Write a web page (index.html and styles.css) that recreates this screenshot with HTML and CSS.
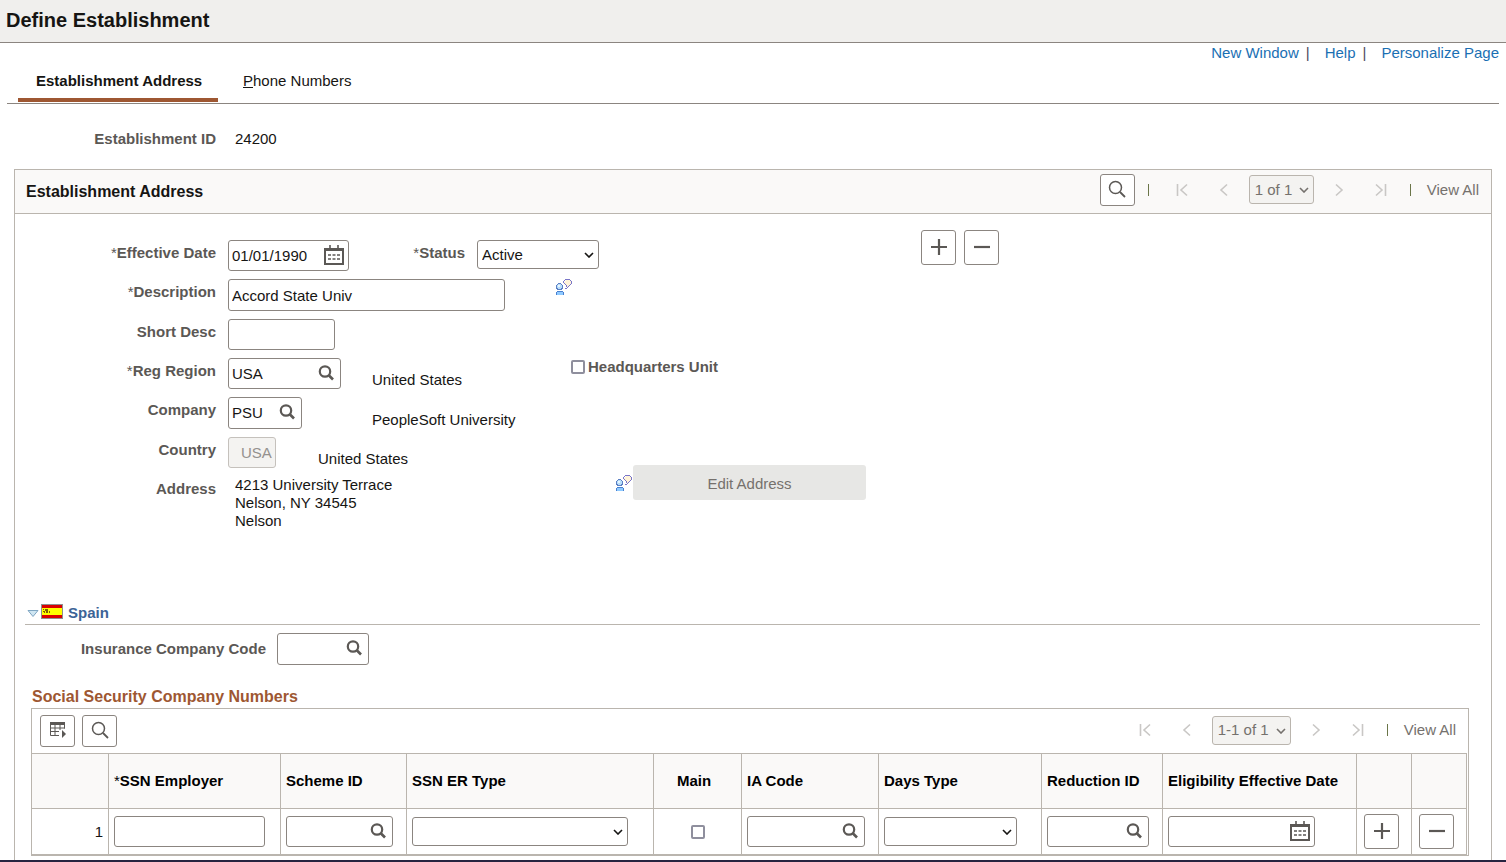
FILE: index.html
```
<!DOCTYPE html>
<html lang="en">
<head>
    <meta charset="UTF-8">
    <meta name="viewport" content="width=device-width, initial-scale=1.0">
    <title>Define Establishment</title>
    <link rel="stylesheet" href="styles.css">
</head>
<body>
    <!-- Shared icons -->
    <svg class="sprite" aria-hidden="true">
        <symbol id="icon-search" viewBox="0 0 16 16"><circle cx="7" cy="6.500" r="5.200" fill="none" stroke="currentColor" stroke-width="2.200"/><path d="M10.500 10L15 14.500" stroke="currentColor" stroke-width="2.600"/></symbol>
        <symbol id="icon-find" viewBox="0 0 18 18"><circle cx="7.500" cy="7.500" r="6" fill="none" stroke="currentColor" stroke-width="1.500"/><path d="M12 12L17 17" stroke="currentColor" stroke-width="1.800"/></symbol>
        <symbol id="icon-calendar" viewBox="0 0 20 20"><path d="M1 4H19V19H1Z" fill="none" stroke="currentColor" stroke-width="2"/><path d="M1 5.500H19" stroke="currentColor" stroke-width="1"/><path d="M6 0V6M14 0V6" stroke="currentColor" stroke-width="1.600"/><path d="M4 10H16M4 14H16" stroke="currentColor" stroke-width="1.600" stroke-dasharray="3 1.500"/></symbol>
        <symbol id="icon-down" viewBox="0 0 10 6"><path d="M1 1L5 5L9 1" fill="none" stroke="currentColor" stroke-width="1.600"/></symbol>
        <symbol id="icon-first" viewBox="0 0 12 14"><path d="M1.500 1V13M11 1.500L5 7L11 12.500" fill="none" stroke="currentColor" stroke-width="1.600"/></symbol>
        <symbol id="icon-prev" viewBox="0 0 12 14"><path d="M9 1.500L3 7L9 12.500" fill="none" stroke="currentColor" stroke-width="1.600"/></symbol>
        <symbol id="icon-next" viewBox="0 0 12 14"><path d="M3 1.500L9 7L3 12.500" fill="none" stroke="currentColor" stroke-width="1.600"/></symbol>
        <symbol id="icon-last" viewBox="0 0 12 14"><path d="M10.500 1V13M1 1.500L7 7L1 12.500" fill="none" stroke="currentColor" stroke-width="1.600"/></symbol>
        <symbol id="icon-plus" viewBox="0 0 16 16"><path d="M0 8H16M8 0V16" stroke="currentColor" stroke-width="2.200"/></symbol>
        <symbol id="icon-minus" viewBox="0 0 16 16"><path d="M0 8H16" stroke="currentColor" stroke-width="2.200"/></symbol>
        <symbol id="icon-grid" viewBox="0 0 16 16"><path d="M0 0H15V3H0Z" fill="currentColor"/><path d="M.500 2V13.500H9M5 2V13.500M10 2V8M14.500 2V6.500M0 6H15M0 9.500H9" fill="none" stroke="currentColor"/><path d="M12 8L16 12L12 16Z" fill="currentColor"/></symbol>
        <symbol id="icon-comment" viewBox="0 0 17 16">
            <path d="M7 4L10 1H14L16 3V4L12 9H11V7L8 5Z" fill="#fff3d8"/>
            <path d="M9 0H14V1H9ZM8 1H9V2H8ZM14 1H15V2H14ZM7 2H8V4H7ZM15 2H16V5H15ZM14 5H15V6H14ZM13 6H14V7H13ZM12 7H13V8H12ZM11 8H12V9H11ZM9 9H11V10H9ZM8 4H9V5H8ZM9 5H10V6H9ZM10 6H11V8H10Z" fill="#7a76c8"/>
            <circle cx="3.500" cy="7.500" r="3" fill="#b9defa" stroke="#5b7fc4"/>
            <path d="M1 13H7V16H1Z" fill="#8fcaff"/>
            <path d="M1 12H7V13H1ZM0 13H1V16H0ZM7 13H8V16H7Z" fill="#4a80d0"/>
            <path d="M2 6H4V8H2Z" fill="#e8f6ff"/>
        </symbol>
    </svg>

    <header class="page-header">
        <h1>Define Establishment</h1>
    </header>

    <main class="page">
        <nav class="page-links">
            <a href="#">New Window</a><span>|</span>
            <a href="#">Help</a><span>|</span>
            <a href="#">Personalize Page</a>
        </nav>

        <nav class="tabs">
            <a class="tab active" href="#">Establishment Address</a>
            <a class="tab" href="#"><u>P</u>hone Numbers</a>
        </nav>

        <div class="establishment-id">
            <span class="label">Establishment ID</span>
            <span class="value">24200</span>
        </div>

        <section class="panel">
            <div class="panel-header">
                <h2>Establishment Address</h2>
                <div class="pager">
                    <button class="icon-button" aria-label="Find"><svg width="18" height="18"><use href="#icon-find"/></svg></button>
                    <span class="separator"></span>
                    <button class="step" disabled aria-label="First"><svg width="12" height="14"><use href="#icon-first"/></svg></button>
                    <button class="step" disabled aria-label="Previous"><svg width="12" height="14"><use href="#icon-prev"/></svg></button>
                    <span class="select-box pager-select">
                        <select disabled aria-label="Row"><option>1 of 1</option></select>
                        <svg width="10" height="6"><use href="#icon-down"/></svg>
                    </span>
                    <button class="step" disabled aria-label="Next"><svg width="12" height="14"><use href="#icon-next"/></svg></button>
                    <button class="step" disabled aria-label="Last"><svg width="12" height="14"><use href="#icon-last"/></svg></button>
                    <span class="separator"></span>
                    <span class="view-all">View All</span>
                </div>
            </div>

            <div class="form">
                <div class="fields">
                    <div class="row">
                        <label class="label" for="effdt"><span class="required">*</span>Effective Date</label>
                        <span class="lookup date">
                            <input type="text" id="effdt" value="01/01/1990">
                            <button aria-label="Choose a date"><svg width="20" height="20"><use href="#icon-calendar"/></svg></button>
                        </span>
                        <label class="label status-label" for="status"><span class="required">*</span>Status</label>
                        <span class="select-box status">
                            <select id="status"><option>Active</option><option>Inactive</option></select>
                            <svg width="10" height="6"><use href="#icon-down"/></svg>
                        </span>
                    </div>
                    <div class="row">
                        <label class="label" for="descr"><span class="required">*</span>Description</label>
                        <input class="text description tall" type="text" id="descr" value="Accord State Univ">
                        <svg class="comment" width="17" height="16" shape-rendering="crispEdges"><use href="#icon-comment"/></svg>
                    </div>
                    <div class="row">
                        <label class="label" for="short-descr">Short Desc</label>
                        <input class="text short" type="text" id="short-descr">
                    </div>
                    <div class="row">
                        <label class="label" for="region"><span class="required">*</span>Reg Region</label>
                        <span class="field-cell">
                            <span class="lookup region">
                                <input type="text" id="region" value="USA">
                                <button aria-label="Look up Reg Region"><svg width="16" height="16"><use href="#icon-search"/></svg></button>
                            </span>
                        </span>
                        <span class="field-text">United States</span>
                        <span class="check">
                            <input type="checkbox" id="headquarters">
                            <label for="headquarters">Headquarters Unit</label>
                        </span>
                    </div>
                    <div class="row">
                        <label class="label" for="company">Company</label>
                        <span class="field-cell">
                            <span class="lookup company tall">
                                <input type="text" id="company" value="PSU">
                                <button aria-label="Look up Company"><svg width="16" height="16"><use href="#icon-search"/></svg></button>
                            </span>
                        </span>
                        <span class="field-text">PeopleSoft University</span>
                    </div>
                    <div class="split">
                        <div class="split-left">
                            <div class="row">
                                <label class="label" for="country">Country</label>
                                <span class="field-cell narrow">
                                    <input class="text country" type="text" id="country" value="USA" disabled>
                                </span>
                                <span class="field-text">United States</span>
                            </div>
                            <div class="row">
                                <span class="label">Address</span>
                                <address>4213 University Terrace<br>Nelson, NY 34545<br>Nelson</address>
                            </div>
                        </div>
                        <div class="edit-address">
                            <svg width="17" height="16" shape-rendering="crispEdges"><use href="#icon-comment"/></svg>
                            <button disabled>Edit Address</button>
                        </div>
                    </div>
                </div>
                <div class="row-actions">
                    <button class="icon-button square" aria-label="Add a new row"><svg width="16" height="16"><use href="#icon-plus"/></svg></button>
                    <button class="icon-button square" aria-label="Delete row"><svg width="16" height="16"><use href="#icon-minus"/></svg></button>
                </div>
            </div>

            <!-- Spain -->
            <div class="country-header">
                <svg class="arrow" width="12" height="8"><path d="M1 .500H11L6 6.500Z" fill="#cfe6f2" stroke="#7fa6c2"/></svg>
                <svg width="22" height="15" shape-rendering="crispEdges">
                    <rect width="22" height="15" fill="#8f8f8f"/>
                    <rect x="1" y="1" width="20" height="13" fill="#d90000"/>
                    <rect x="1" y="4" width="20" height="7" fill="#ffff00"/>
                    <path d="M2 5H3V6H2ZM4 5H7V7H4ZM2 7H4V8H2ZM5 7H7V9H5ZM8 7H9V9H8ZM3 8H4V9H3Z" fill="#806000"/>
                </svg>
                <a href="#">Spain</a>
            </div>

            <div class="insurance">
                <label for="insurance-code">Insurance Company Code</label>
                <span class="lookup tall insurance-code">
                    <input type="text" id="insurance-code">
                    <button aria-label="Look up Insurance Company Code"><svg width="16" height="16"><use href="#icon-search"/></svg></button>
                </span>
            </div>

            <div class="grid">
                <h3>Social Security Company Numbers</h3>
                <div class="grid-box">
                    <div class="grid-toolbar">
                        <button class="icon-button" aria-label="Grid actions"><svg width="16" height="16"><use href="#icon-grid"/></svg></button>
                        <button class="icon-button" aria-label="Find in grid"><svg width="18" height="18"><use href="#icon-find"/></svg></button>
                        <div class="pager">
                            <button class="step" disabled aria-label="First"><svg width="12" height="14"><use href="#icon-first"/></svg></button>
                            <button class="step" disabled aria-label="Previous"><svg width="12" height="14"><use href="#icon-prev"/></svg></button>
                            <span class="select-box pager-select wide">
                                <select disabled aria-label="Rows"><option>1-1 of 1</option></select>
                                <svg width="10" height="6"><use href="#icon-down"/></svg>
                            </span>
                            <button class="step" disabled aria-label="Next"><svg width="12" height="14"><use href="#icon-next"/></svg></button>
                            <button class="step" disabled aria-label="Last"><svg width="12" height="14"><use href="#icon-last"/></svg></button>
                            <span class="separator"></span>
                            <span class="view-all">View All</span>
                        </div>
                    </div>
                    <table>
                        <colgroup>
                            <col class="col-number"><col class="col-employer"><col class="col-scheme"><col class="col-type">
                            <col class="col-main"><col class="col-ia"><col class="col-days"><col class="col-reduction">
                            <col class="col-date"><col class="col-action"><col class="col-action">
                        </colgroup>
                        <thead>
                            <tr>
                                <th></th>
                                <th><span class="required">*</span>SSN Employer</th>
                                <th>Scheme ID</th>
                                <th>SSN ER Type</th>
                                <th class="center">Main</th>
                                <th>IA Code</th>
                                <th>Days Type</th>
                                <th>Reduction ID</th>
                                <th>Eligibility Effective Date</th>
                                <th></th>
                                <th></th>
                            </tr>
                        </thead>
                        <tbody>
                            <tr>
                                <td class="number">1</td>
                                <td><input class="text employer" type="text" aria-label="SSN Employer"></td>
                                <td>
                                    <span class="lookup scheme">
                                        <input type="text" aria-label="Scheme ID">
                                        <button aria-label="Look up Scheme ID"><svg width="16" height="16"><use href="#icon-search"/></svg></button>
                                    </span>
                                </td>
                                <td>
                                    <span class="select-box er-type">
                                        <select aria-label="SSN ER Type"><option></option></select>
                                        <svg width="10" height="6"><use href="#icon-down"/></svg>
                                    </span>
                                </td>
                                <td class="center"><input type="checkbox" aria-label="Main"></td>
                                <td>
                                    <span class="lookup ia-code">
                                        <input type="text" aria-label="IA Code">
                                        <button aria-label="Look up IA Code"><svg width="16" height="16"><use href="#icon-search"/></svg></button>
                                    </span>
                                </td>
                                <td>
                                    <span class="select-box days-type">
                                        <select aria-label="Days Type"><option></option></select>
                                        <svg width="10" height="6"><use href="#icon-down"/></svg>
                                    </span>
                                </td>
                                <td>
                                    <span class="lookup reduction">
                                        <input type="text" aria-label="Reduction ID">
                                        <button aria-label="Look up Reduction ID"><svg width="16" height="16"><use href="#icon-search"/></svg></button>
                                    </span>
                                </td>
                                <td>
                                    <span class="lookup date eligibility">
                                        <input type="text" aria-label="Eligibility Effective Date">
                                        <button aria-label="Choose a date"><svg width="20" height="20"><use href="#icon-calendar"/></svg></button>
                                    </span>
                                </td>
                                <td class="action"><button class="icon-button square" aria-label="Add row"><svg width="16" height="16"><use href="#icon-plus"/></svg></button></td>
                                <td class="action"><button class="icon-button square" aria-label="Delete row 1"><svg width="16" height="16"><use href="#icon-minus"/></svg></button></td>
                            </tr>
                        </tbody>
                    </table>
                </div>
            </div>
        </section>
    </main>
</body>
</html>
```
FILE: styles.css
```
* {
    box-sizing: border-box;
}
body {
    margin: 0;
    min-height: 100vh;
    display: flex;
    flex-direction: column;
    border-bottom: 2px solid #262440;
    background-color: white;
    color: #161513;
    font-family: Arial, "Liberation Sans", sans-serif;
    font-size: 15px;
    line-height: 18px;
}
h1, h2, h3 {
    margin: 0;
}
input, select, button {
    font: inherit;
    color: inherit;
}
button {
    padding: 0;
    cursor: pointer;
}
button:disabled {
    cursor: default;
}
a {
    text-decoration: none;
}
svg {
    display: block;
    flex: none;
}
.sprite {
    position: absolute;
    width: 0;
    height: 0;
}

/* Header */
.page-header {
    height: 43px;
    padding: 8px 6px;
    background-color: #f0efed;
    border-bottom: 1px solid #8b8580;
}
.page-header h1 {
    font-size: 20px;
    line-height: 24px;
}
.page {
    flex: 1;
    display: flex;
    flex-direction: column;
}
.page-links {
    display: flex;
    justify-content: flex-end;
    padding: 1px 7px 0;
    color: #4a4a60;
}
.page-links a {
    color: #1a6fb3;
}
.page-links span {
    margin: 0 15px 0 7px;
}

/* Tabs */
.tabs {
    display: flex;
    margin: 0 7px;
    padding: 10px 11px 1px;
    border-bottom: 1px solid #8b8580;
}
.tab {
    height: 30px;
    padding: 0 18px;
    color: #161513;
    border-bottom: 4px solid transparent;
}
.tab.active {
    width: 200px;
    white-space: nowrap;
    font-weight: bold;
    border-bottom-color: #9e5732;
}
.tab + .tab {
    margin-left: 7px;
}
.label {
    flex: none;
    width: 201px;
    padding-top: 4px;
    text-align: right;
    font-weight: bold;
    color: #5b5855;
}
.required {
    font-weight: normal;
}
.establishment-id {
    display: flex;
    align-items: flex-end;
    gap: 19px;
    height: 44px;
    margin: 0 15px 21px;
}

/* Panel */
.panel {
    flex: 1;
    margin: 0 14px;
    border: 1px solid #bab5ae;
    border-bottom: none;
}
.panel-header {
    display: flex;
    align-items: center;
    justify-content: space-between;
    height: 44px;
    padding: 0 12px 4px 11px;
    background-color: #faf9f8;
    border-bottom: 1px solid #bab5ae;
}
.panel-header h2 {
    padding-top: 4px;
    font-size: 16px;
}
.icon-button {
    display: inline-flex;
    align-items: center;
    justify-content: center;
    width: 35px;
    height: 32px;
    padding-bottom: 2px;
    background-color: white;
    color: #5b5855;
    border: 1px solid #8b8580;
    border-radius: 3px;
}
.icon-button.square {
    height: 35px;
}
.pager {
    display: flex;
    align-items: center;
    color: #75716d;
}
.pager .step {
    display: flex;
    justify-content: center;
    width: 42px;
    background: none;
    border: none;
    color: #c9c7c5;
}
.separator {
    width: 1px;
    height: 12px;
    margin: 0 8px;
    background-color: #6a7548;
}
.icon-button + .separator {
    margin: 0 12px 0 13px;
}
.view-all {
    margin-left: 8px;
}

/* Inputs */
.text, .lookup {
    height: 31px;
    background-color: white;
    border: 1px solid #8b8580;
    border-radius: 3px;
}
.text {
    display: block;
    padding: 0 3px;
}
.lookup {
    display: flex;
    align-items: center;
    padding: 0 6px 0 3px;
}
.lookup.date {
    padding-right: 4px;
}
.lookup input {
    flex: 1;
    min-width: 0;
    padding: 0;
    border: none;
    outline: none;
    background: none;
}
.lookup button {
    padding-bottom: 2px;
    border: none;
    background: none;
    color: #5b5855;
}
.text.tall, .lookup.tall {
    height: 32px;
}
.select-box {
    display: flex;
    position: relative;
    height: 29px;
}
.select-box select {
    appearance: none;
    width: 100%;
    padding: 0 4px;
    background-color: white;
    border: 1px solid #8b8580;
    border-radius: 3px;
}
.select-box svg {
    position: absolute;
    right: 5px;
    top: 12px;
    pointer-events: none;
}
.pager-select {
    width: 65px;
    margin: 0 4px;
}
.pager-select.wide {
    width: 79px;
}
.pager-select select {
    padding: 0 5px;
    background-color: #f4f3f1;
    border-color: #bab5ae;
    opacity: 1;
}
input[type="checkbox"] {
    appearance: none;
    width: 14px;
    height: 14px;
    margin: 0;
    background-color: white;
    border: 2px solid #8f8f9d;
    border-radius: 2px;
}

/* Form */
.form {
    display: flex;
    align-items: flex-start;
}
.fields {
    flex: none;
    width: 906px;
    padding: 26px 0 72px;
}
.row {
    display: flex;
    align-items: flex-start;
    margin-bottom: 8px;
}
.row > .label {
    margin-right: 12px;
}
.row > .status-label {
    width: 116px;
}
.date {
    width: 121px;
}
.status {
    width: 122px;
}
.description {
    width: 277px;
}
.comment {
    margin-left: 51px;
}
.short {
    width: 107px;
}
.region {
    width: 113px;
}
.company {
    width: 74px;
}
.field-cell {
    width: 144px;
}
.field-cell.narrow {
    width: 90px;
}
.field-text {
    width: 199px;
    align-self: flex-end;
}
.check {
    display: flex;
    align-items: center;
    gap: 3px;
    font-weight: bold;
    color: #5b5855;
}
.text.country {
    width: 48px;
    padding: 0 0 0 12px;
    background-color: #f4f3f1;
    border-color: #c5c1bc;
    color: #94918e;
}
.split {
    display: flex;
    align-items: flex-start;
}
.split-left {
    width: 601px;
}
.split-left .row:last-child {
    margin-bottom: 0;
}
address {
    padding-left: 7px;
    font-style: normal;
}
.edit-address {
    display: flex;
    align-items: center;
    padding-top: 28px;
}
.edit-address button {
    width: 233px;
    height: 35px;
    padding-top: 2px;
    background-color: #e7e7e5;
    color: #75716d;
    border: none;
    border-radius: 3px;
}
.row-actions {
    display: flex;
    gap: 8px;
    padding-top: 16px;
}

/* Spain */
.country-header {
    display: flex;
    align-items: flex-start;
    height: 23px;
    margin: 0 11px 8px 10px;
    padding: 2px 0 0 2px;
    gap: 2px;
    border-bottom: 1px solid #bab5ae;
}
.country-header .arrow {
    align-self: center;
}
.country-header a {
    margin-left: 3px;
    font-weight: bold;
    color: #3c6496;
}
.insurance {
    display: flex;
    align-items: center;
    gap: 11px;
}
.insurance label {
    width: 251px;
    text-align: right;
    font-weight: bold;
    color: #5b5855;
}
.insurance-code {
    width: 92px;
}

/* Grid */
.grid {
    margin: 22px 22px 4px 16px;
}
.grid h3 {
    margin: 0 1px 1px;
    font-size: 16px;
    line-height: 20px;
    color: #9e5732;
}
.grid-box {
    border: 1px solid #bab5ae;
}
.grid-toolbar {
    display: flex;
    align-items: center;
    gap: 7px;
    height: 44px;
    padding: 0 12px 0 8px;
}
.grid-toolbar .pager {
    margin-left: auto;
    padding-bottom: 2px;
}
table {
    width: calc(100% - 1px);
    table-layout: fixed;
    border-collapse: separate;
    border-spacing: 0;
    border-top: 1px solid #bab5ae;
}
th, td {
    padding: 0 5px;
    text-align: left;
    border-right: 1px solid #bab5ae;
    border-bottom: 1px solid #bab5ae;
}
th {
    height: 55px;
    background-color: #faf9f8;
    color: black;
    white-space: nowrap;
}
td {
    height: 46px;
}
.center {
    text-align: center;
}
th.center {
    padding-right: 12px;
}
td.center input {
    display: block;
    margin: 0 auto;
}
td.number {
    text-align: right;
}
td.action {
    padding: 0 7px;
}
td.action .icon-button {
    display: flex;
}
.col-number { width: 77px; }
.col-employer { width: 172px; }
.col-scheme { width: 126px; }
.col-type { width: 247px; }
.col-main { width: 88px; }
.col-ia { width: 137px; }
.col-days { width: 163px; }
.col-reduction { width: 121px; }
.col-date { width: 194px; }
.col-action { width: 55px; }
.employer { width: 151px; }
.scheme { width: 107px; }
.er-type { width: 216px; }
.ia-code { width: 118px; }
.days-type { width: 133px; }
.reduction { width: 102px; }
.eligibility { width: 147px; }
```
